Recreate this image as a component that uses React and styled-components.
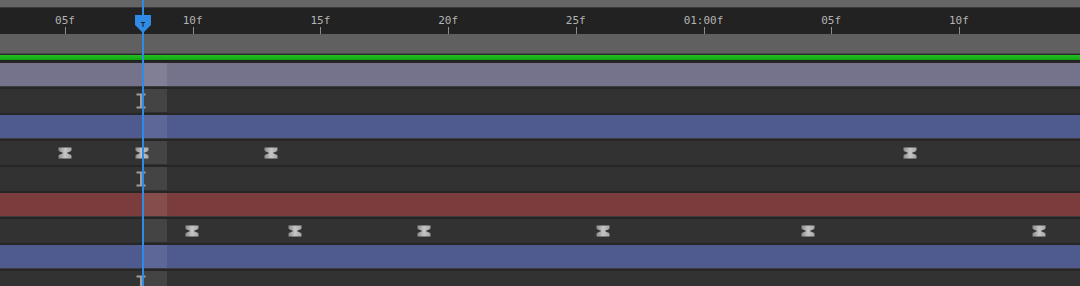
import React from 'react';
import styled, { createGlobalStyle } from 'styled-components';

const PX_PER_FRAME = 25.54;
const ORIGIN = 65 - 5 * PX_PER_FRAME; // x of frame 0
const PLAYHEAD_FRAME = 3 + 5;

const frameX = (f) => ORIGIN + f * PX_PER_FRAME;

const GlobalStyle = createGlobalStyle`
  html, body {
    margin: 0;
    padding: 0;
    background: #262626;
  }
`;

const Timeline = styled.div`
  position: relative;
  width: 1080px;
  height: 286px;
  overflow: hidden;
  display: flex;
  flex-direction: column;
  background: #262626;
  font-family: 'DejaVu Sans Mono', 'Liberation Mono', monospace;

  & > * {
    flex-shrink: 0;
  }
`;

const TopStrip = styled.div`
  height: 7px;
  background: #656565;
  border-bottom: 1px solid #3a3a3a;
`;

const Ruler = styled.div`
  position: relative;
  height: 26px;
  background: #222222;
`;

const Label = styled.span`
  position: absolute;
  top: 6px;
  transform: translateX(-50%);
  font-size: 11px;
  line-height: 13px;
  color: #b4b4b4;
  white-space: nowrap;
`;

const Tick = styled.span`
  position: absolute;
  bottom: 0;
  width: 1px;
  height: 7px;
  background: #8e8e8e;
`;

const WorkArea = styled.div`
  height: 19px;
  background: #606060;
  border-bottom: 1px solid #4a4a4a;
`;

const WorkBar = styled.div`
  height: 5px;
  border-top: 1px solid #2a2a2a;
  border-bottom: 1px solid #1f1f1f;
  background: linear-gradient(#22c022, #13a613);
`;

const Tracks = styled.div`
  display: flex;
  flex-direction: column;
`;

const trackColors = {
  dark: '#323232',
  lavender: '#74738b',
  blue: '#4f5a8e',
  red: '#7a3c3c',
};

const Track = styled.div`
  position: relative;
  box-sizing: border-box;
  height: 26px;
  flex: none;
  border-top: 2px solid #262626;
  border-bottom: 1px solid ${({ $kind }) => ($kind === 'dark' ? '#303030' : '#3c3c3c')};
  background: ${({ $kind }) => trackColors[$kind]};
`;

const FrameCell = styled.div`
  position: absolute;
  top: 0;
  bottom: 0;
  width: 25px;
  background: rgba(255, 255, 255, 0.09);
`;

const Marker = styled.svg`
  position: absolute;
  top: 50%;
  transform: translate(-50%, -50%);
  overflow: visible;
`;

const PlayheadLine = styled.div`
  position: absolute;
  top: 0;
  bottom: 0;
  width: 2px;
  background: #2f8be6;
  z-index: 5;
`;

const PlayheadHead = styled.svg`
  position: absolute;
  top: 15px;
  transform: translateX(-50%);
  z-index: 6;
`;

const labels = [
  { f: 5, text: '05f' },
  { f: 10, text: '10f' },
  { f: 15, text: '15f' },
  { f: 20, text: '20f' },
  { f: 25, text: '25f' },
  { f: 30, text: '01:00f' },
  { f: 35, text: '05f' },
  { f: 40, text: '10f' },
];

const tracks = [
  { kind: 'lavender' },
  { kind: 'dark', beams: [141] },
  { kind: 'blue' },
  { kind: 'dark', keys: [65, 142, 271, 910] },
  { kind: 'dark', beams: [141] },
  { kind: 'red' },
  { kind: 'dark', keys: [192, 295, 424, 603, 808, 1039] },
  { kind: 'blue' },
  { kind: 'dark', beams: [141] },
];

const Keyframe = ({ x }) => (
  <Marker width="13" height="11" viewBox="0 0 13 11" style={{ left: x }}>
    <defs>
      <linearGradient id="kf" x1="0" x2="1" y1="0" y2="0">
        <stop offset="0" stopColor="#8c8c8c" />
        <stop offset="0.5" stopColor="#c6c6c6" />
        <stop offset="1" stopColor="#a6a6a6" />
      </linearGradient>
    </defs>
    <path
      d="M0 0 H13 V2.5 C13 4.5 8.5 4.5 8.5 5.5 C8.5 6.5 13 6.5 13 8.5 V11 H0 V8.5 C0 6.5 4.5 6.5 4.5 5.5 C4.5 4.5 0 4.5 0 2.5 Z"
      fill="url(#kf)"
    />
  </Marker>
);

const Beam = ({ x }) => (
  <Marker width="9" height="15" viewBox="0 0 9 15" style={{ left: x }}>
    <path d="M0 0 H9 V2 H5.5 V13 H9 V15 H0 V13 H3.5 V2 H0 Z" fill="#a0a0a0" />
  </Marker>
);

const App = () => {
  const playX = frameX(PLAYHEAD_FRAME);

  return (
    <>
      <GlobalStyle />
      <Timeline>
        <TopStrip />
        <Ruler>
          {labels.map(({ f, text }) => (
            <React.Fragment key={f}>
              <Label style={{ left: frameX(f) }}>{text}</Label>
              <Tick style={{ left: Math.round(frameX(f)) }} />
            </React.Fragment>
          ))}
        </Ruler>
        <WorkArea />
        <WorkBar />
        <Tracks>
          {tracks.map((t, i) => (
            <Track key={i} $kind={t.kind}>
              <FrameCell style={{ left: Math.round(playX) }} />
              {t.keys && t.keys.map((x) => <Keyframe key={x} x={x} />)}
              {t.beams && t.beams.map((x) => <Beam key={x} x={x} />)}
            </Track>
          ))}
        </Tracks>
        <PlayheadLine style={{ left: Math.round(playX) }} />
        <PlayheadHead width="16" height="18" viewBox="0 0 16 18" style={{ left: playX + 1 }}>
          <path d="M0 0 H16 V10 L8 18 L0 10 Z" fill="#2f8be6" />
          <path d="M6 7 H10 V8 H8.5 V12 H7.5 V8 H6 Z" fill="#1a1a1a" />
        </PlayheadHead>
      </Timeline>
    </>
  );
};

export default App;
